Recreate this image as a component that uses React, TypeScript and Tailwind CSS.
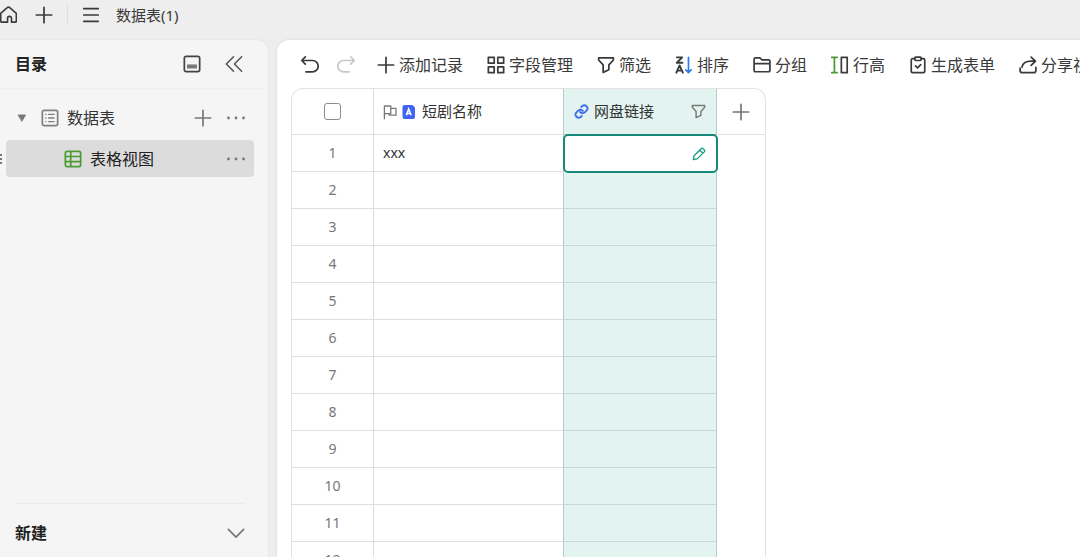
import type { ReactNode } from "react";

const rows = Array.from({ length: 14 }, (_, i) => ({ id: i + 1, name: i === 0 ? "xxx" : "" }));

function Icon({ size = 20, className = "", children }: { size?: number; className?: string; children: ReactNode }) {
  return (
    <svg
      width={size}
      height={size}
      viewBox="0 0 20 20"
      fill="none"
      stroke="currentColor"
      strokeWidth="1.9"
      strokeLinecap="round"
      strokeLinejoin="round"
      className={`shrink-0 ${className}`}
      aria-hidden="true"
    >
      {children}
    </svg>
  );
}

const Plus = () => <path d="M10 1.500v17M1.500 10h17" />;
const Dots = () => (
  <g fill="currentColor" stroke="none">
    <circle cx="2.500" cy="10" r="1.400" />
    <circle cx="10" cy="10" r="1.400" />
    <circle cx="17.500" cy="10" r="1.400" />
  </g>
);
const Funnel = () => <path d="M1.800 2h16.400v2.400l-5 5.500v5.400l-6.400 2.900V9.900l-5-5.500z" />;

function ToolButton({ icon, label }: { icon: ReactNode; label: string }) {
  return (
    <button className="flex items-center gap-1 whitespace-nowrap">
      <Icon size={18}>{icon}</Icon>
      {label}
    </button>
  );
}

function TopBar() {
  return (
    <header className="flex h-10 shrink-0 items-start pt-1 text-[#3a3a3a]">
      <button aria-label="首页" className="flex h-5 w-5 items-center">
        <Icon size={17}>
          <path d="M.8 8.800 8.500 2a2.200 2.200 0 0 1 3 0l7.700 6.800V18a1 1 0 0 1-1 1h-4.700v-4.500a2.300 2.300 0 0 0-4.600 0V19H1.800a1 1 0 0 1-1-1z" />
        </Icon>
      </button>
      <button aria-label="新标签" className="ml-[13px] p-0.5">
        <Icon size={18}>
          <Plus />
        </Icon>
      </button>
      <div className="mx-3 h-5 w-px bg-[#ddd]" />
      <button aria-label="菜单" className="p-0.5">
        <Icon size={18}>
          <path d="M2 3h16M2 10h16M2 17h16" />
        </Icon>
      </button>
      <span className="ml-3.5 text-[15px] leading-[22px]">数据表(1)</span>
    </header>
  );
}

function Sidebar() {
  return (
    <aside className="flex w-[268px] shrink-0 flex-col rounded-tr-xl bg-[#f5f5f5] shadow-[0_0_3px_rgba(0,0,0,0.07)]">
      <div className="flex h-[49px] items-center border-b border-[#efefef] pr-[25px] pl-[15px]">
        <h2 className="flex-1 text-base font-bold text-[#222]">目录</h2>
        <button aria-label="停靠" className="mr-6 text-[#444]">
          <Icon size={18}>
            <rect x="1.500" y="1.500" width="17" height="17" rx="2" />
            <path d="M4.500 10.500h11V15h-11z" fill="#777" stroke="none" />
          </Icon>
        </button>
        <button aria-label="收起" className="text-[#555]">
          <Icon size={18}>
            <path d="m9.500 2-8 8 8 8M18.500 2l-8 8 8 8" strokeWidth="1.700" />
          </Icon>
        </button>
      </div>
      <nav className="flex-1 pt-[11px]">
        <div className="flex h-9 items-center pr-[22px] pl-[17px]">
          <button aria-label="展开" className="mr-3.5 text-[#777]">
            <Icon size={10}>
              <path d="M3 4h14l-7 12z" fill="currentColor" />
            </Icon>
          </button>
          <Icon size={18} className="mr-2 text-[#808080]">
            <rect x="1.500" y="1.500" width="17" height="17" rx="2" />
            <path d="M8.500 6h6M8.500 10h6M8.500 14h6M5.300 6h.2M5.300 10h.2M5.300 14h.2" strokeWidth="1.600" />
          </Icon>
          <a href="#base" className="flex-1 text-base text-[#333]">数据表</a>
          <button aria-label="添加" className="mr-3.5 text-[#777]">
            <Icon size={18}>
              <Plus />
            </Icon>
          </button>
          <button aria-label="更多" className="text-[#777]">
            <Icon size={20}>
              <Dots />
            </Icon>
          </button>
        </div>
        <div className="mt-1 flex items-center">
          <div className="h-3 w-1.5 text-[#777]">
            <svg width="3" height="12" fill="currentColor" aria-hidden="true">
              <path d="M0 1h2v2H0zM0 5h2v2H0zM0 9h2v2H0z" />
            </svg>
          </div>
          <div className="mr-3.5 flex h-[37px] flex-1 items-center rounded bg-[#dcdcdc] pr-2 pl-[58px]">
            <Icon size={18} className="mr-2 text-[#4b9b2e]">
              <rect x="1.500" y="1.500" width="17" height="17" rx="2" />
              <path d="M7.500 2v16M2 7.200h16M2 12.800h16" />
            </Icon>
            <a href="#grid" className="flex-1 text-base text-[#222]">表格视图</a>
            <button aria-label="视图更多" className="text-[#777]">
              <Icon size={20}>
                <Dots />
              </Icon>
            </button>
          </div>
        </div>
      </nav>
      <button className="mr-[23px] ml-[15px] flex h-[54px] shrink-0 items-center justify-between border-t border-[#ebebeb] pt-1 text-base font-bold text-[#222]">
        新建
        <Icon size={18} className="text-[#777]">
          <path d="m1.500 6 8.500 8.500L18.500 6" />
        </Icon>
      </button>
    </aside>
  );
}

function Toolbar() {
  return (
    <div className="flex h-12 items-center gap-6 pt-0.5 pl-6 text-base text-[#3a3a3a]">
      <div className="-mr-0.5 flex items-center gap-[18px]">
        <button aria-label="撤销">
          <Icon size={18}>
            <path d="M4.800 1 .8 5l4 4M1.500 5h11.300a6.300 6.300 0 0 1 0 12.600H5.500" />
          </Icon>
        </button>
        <button aria-label="重做" disabled className="text-[#c8c8c8]">
          <Icon size={18}>
            <path d="m15.200 1 4 4-4 4M18.500 5H7.200a6.300 6.300 0 0 0 0 12.600h6.300" />
          </Icon>
        </button>
      </div>
      <ToolButton icon={<Plus />} label="添加记录" />
      <ToolButton
        icon={
          <>
            <rect x="1.500" y="1.500" width="6.500" height="6.500" />
            <rect x="12" y="1.500" width="6.500" height="6.500" />
            <rect x="1.500" y="12" width="6.500" height="6.500" />
            <rect x="12" y="12" width="6.500" height="6.500" />
          </>
        }
        label="字段管理"
      />
      <ToolButton icon={<Funnel />} label="筛选" />
      <ToolButton
        icon={
          <>
            <path d="M2 1.500h6L2 7.500h6.300M1.500 18.500l3.600-8 3.600 8M3 16.200h4.300" strokeWidth="2.100" />
            <path d="M15 1.500v17M12 15.500l3 3 3-3" stroke="#2f7be8" />
          </>
        }
        label="排序"
      />
      <ToolButton
        icon={<path d="M1.200 16v-12.500a1.500 1.500 0 0 1 1.500-1.500h5l2 2.200h7.600A1.500 1.500 0 0 1 18.800 5.700V16a1.500 1.500 0 0 1-1.500 1.500H2.700A1.500 1.500 0 0 1 1.200 16zM1.200 8.500h17.600" />}
        label="分组"
      />
      <ToolButton
        icon={
          <>
            <path d="M.8 1.500h6M.8 18.500h6M3.800 1.500v17" stroke="#4b9b2e" />
            <path d="M11.500 1.500h6.500v17h-6.500z" />
          </>
        }
        label="行高"
      />
      <ToolButton
        icon={
          <>
            <path d="M6.500 3H4a1.500 1.500 0 0 0-1.500 1.500V17A1.500 1.500 0 0 0 4 18.500h12a1.500 1.500 0 0 0 1.500-1.500V4.500A1.500 1.500 0 0 0 16 3h-2.500M7.200 11l2.300 2.300L13 9.500" />
            <rect x="6.500" y="1.200" width="7" height="3.800" rx="1" />
          </>
        }
        label="生成表单"
      />
      <ToolButton
        icon={<path d="m13.500 1.200 4.800 4.600-4.800 4.600M17.500 5.800h-4C8 5.800 4 8.200 3.300 12.500M1.200 13.500V16A2.500 2.500 0 0 0 3.700 18.500h12.600a2.500 2.500 0 0 0 2.500-2.500v-3.500" />}
        label="分享视图"
      />
    </div>
  );
}

function Grid() {
  return (
    <div className="ml-3.5 w-[475px] rounded-t-xl border border-b-0 border-[#e2e2e2] text-[#333]">
      <table className="w-full table-fixed border-separate border-spacing-0">
        <colgroup>
          <col className="w-[82px]" />
          <col className="w-[190px]" />
          <col className="w-[153px]" />
          <col />
        </colgroup>
        <thead>
          <tr className="h-[46px] text-[15px]">
            <th className="border-r border-b border-[#dedede] p-0">
              <input
                type="checkbox"
                aria-label="全选"
                className="mx-auto block size-[17px] appearance-none rounded-[3px] border border-[#8c8c8c] bg-white"
              />
            </th>
            <th className="border-r border-b border-[#dedede] border-r-[#b5cdc8] p-0 font-normal">
              <div className="flex items-center pl-2">
                <Icon size={16} className="mr-1 text-[#777]">
                  <path d="M3 18.500V2.500h8v9.500H3M11 5.500h6.500V14H9v-2" strokeWidth="1.600" />
                </Icon>
                <svg width="14" height="16" viewBox="0 0 14 16" className="mr-1.5" aria-hidden="true">
                  <path d="M2.500 1h7.800L13 3.500V13a2 2 0 0 1-2 2H2.500a2 2 0 0 1-2-2V3a2 2 0 0 1 2-2z" fill="#3f63f2" />
                  <path d="M4.300 11.300 6.700 5l2.400 6.300M5 9.500h3.400" fill="none" stroke="#fff" strokeWidth="1.600" />
                </svg>
                短剧名称
              </div>
            </th>
            <th className="border-r border-b border-[#b5cdc8] bg-[#e3f4f0] p-0 font-normal">
              <div className="flex items-center pr-2.5 pl-2.5">
                <Icon size={15} className="mr-[5px] text-[#3f6fe8]">
                  <g strokeWidth="2.500">
                    <path d="M8.200 10.800a4.200 4.200 0 0 0 6.200.4l2.600-2.600a4.200 4.200 0 0 0-5.900-5.900L9.700 4" />
                    <path d="M11.800 9.200a4.200 4.200 0 0 0-6.200-.4L3 11.400a4.200 4.200 0 0 0 5.900 5.900l1.400-1.300" />
                  </g>
                </Icon>
                <span className="flex-1 text-left">网盘链接</span>
                <button aria-label="筛选网盘链接" className="text-[#777]">
                  <Icon size={15}>
                    <Funnel />
                  </Icon>
                </button>
              </div>
            </th>
            <th className="border-b border-[#e2e2e2] p-0">
              <button aria-label="添加字段" className="mx-auto block text-[#777]">
                <Icon size={18}>
                  <Plus />
                </Icon>
              </button>
            </th>
          </tr>
        </thead>
        <tbody>
          {rows.map((row) => (
            <tr key={row.id} className="h-[37px]">
              <td className="border-r border-b border-[#dedede] p-0 text-center text-sm text-[#777]">{row.id}</td>
              <td className="border-r border-b border-[#dedede] border-r-[#b5cdc8] p-0 pl-[9px] text-sm">{row.name}</td>
              {row.id === 1 ? (
                <td className="rounded-sm bg-white p-0 pr-[11px] outline-2 -outline-offset-1 outline-[#16897a]">
                  <button aria-label="编辑" className="ml-auto block text-[#16a085]">
                    <Icon size={14}>
                      <path d="m2 18 1-5.500L13 2.500a2 2 0 0 1 3 0l1.500 1.500a2 2 0 0 1 0 3L7.500 17zM11 4.500l4.500 4.500" />
                    </Icon>
                  </button>
                </td>
              ) : (
                <td className="border-r border-b border-[#c3dbd6] border-r-[#b5cdc8] bg-[#e3f4f0] p-0" />
              )}
              <td className="p-0" />
            </tr>
          ))}
        </tbody>
      </table>
    </div>
  );
}

export default function App() {
  return (
    <div className="flex h-screen flex-col overflow-hidden bg-[#eee] font-['Noto_Sans','Noto_Sans_CJK_SC',sans-serif]">
      <TopBar />
      <div className="flex min-h-0 flex-1 gap-[9px]">
        <Sidebar />
        <main className="min-w-0 flex-1 overflow-hidden rounded-tl-xl bg-white shadow-[0_0_3px_rgba(0,0,0,0.1)]">
          <Toolbar />
          <Grid />
        </main>
      </div>
    </div>
  );
}
